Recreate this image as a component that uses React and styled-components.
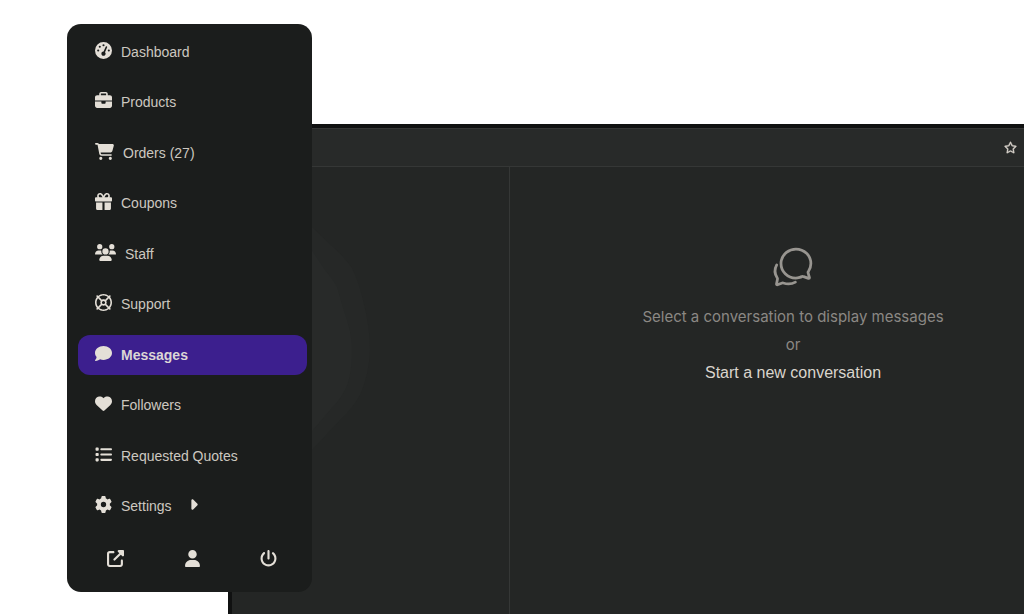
import React, { useState } from "react";
import styled, { createGlobalStyle } from "styled-components";
import {
  FaBriefcase,
  FaCaretRight,
  FaCartShopping,
  FaComment,
  FaGaugeHigh,
  FaGear,
  FaGift,
  FaHeart,
  FaList,
  FaPowerOff,
  FaRegLifeRing,
  FaRegStar,
  FaUpRightFromSquare,
  FaUser,
  FaUsers,
} from "react-icons/fa6";
import { IoChatbubblesOutline } from "react-icons/io5";

const links = [
  { name: "Dashboard", icon: FaGaugeHigh },
  { name: "Products", icon: FaBriefcase },
  { name: "Orders (27)", icon: FaCartShopping, iconWidth: 19 },
  { name: "Coupons", icon: FaGift },
  { name: "Staff", icon: FaUsers, iconWidth: 21 },
  { name: "Support", icon: FaRegLifeRing },
  { name: "Messages", icon: FaComment },
  { name: "Followers", icon: FaHeart },
  { name: "Requested Quotes", icon: FaList },
  { name: "Settings", icon: FaGear, more: true },
];

function App() {
  const [active, setActive] = useState("Messages");

  return (
    <Page>
      <GlobalStyle />
      <Chat>
        <ChatHeader>
          <StarButton aria-label="Starred">
            <FaRegStar />
          </StarButton>
        </ChatHeader>
        <ChatBody>
          <Conversations>
            <svg width="140" height="260" viewBox="0 0 140 260">
              <path
                d="M0 0H66L81 13L101 32Q114 44 120 53Q127 68 131 85Q138 112 138 135Q137 160 128 180Q121 193 108 205L80 235L52 256H0Z"
                fill="#262827"
              />
              <path
                d="M0 20H66L81 37L93 55Q102 66 105 72L111 93Q120 118 120 133Q120 162 113 175Q108 185 98 195L81 215L60 236H0Z"
                fill="#282a29"
              />
            </svg>
          </Conversations>
          <Empty>
            <IoChatbubblesOutline />
            <p>Select a conversation to display messages</p>
            <p>or</p>
            <a href="#new">Start a new conversation</a>
          </Empty>
        </ChatBody>
      </Chat>
      <Menu>
        <ul>
          {links.map(({ name, icon: Icon, iconWidth = 17, more }) => (
            <li key={name}>
              <MenuLink
                href="#menu"
                $active={active === name}
                $iconWidth={iconWidth}
                onClick={() => setActive(name)}
              >
                <Icon />
                <span>{name}</span>
                {more && <Caret />}
              </MenuLink>
            </li>
          ))}
        </ul>
        <MenuFooter>
          <a href="#store" aria-label="Visit store">
            <FaUpRightFromSquare />
          </a>
          <a href="#account" aria-label="Account">
            <FaUser />
          </a>
          <a href="#logout" aria-label="Log out">
            <FaPowerOff />
          </a>
        </MenuFooter>
      </Menu>
    </Page>
  );
}

const GlobalStyle = createGlobalStyle`
  * {
    box-sizing: border-box;
    margin: 0;
    padding: 0;
  }
  body {
    background: white;
    font-family: "Liberation Sans", Arial, sans-serif;
  }
  a {
    text-decoration: none;
  }
  ul {
    list-style: none;
  }
`;

/* the menu and the chat share the middle column, so the menu overlaps the chat */
const Page = styled.div`
  display: grid;
  grid-template-columns: 67px 161px 84px 1fr;
  min-height: 100vh;
`;

const Menu = styled.nav`
  grid-column: 2 / 4;
  grid-row: 1;
  display: flex;
  flex-direction: column;
  margin: 24px 0 22px;
  padding: 8px 5px 16px 11px;
  background: #1b1d1c;
  border-radius: 14px;
  z-index: 1;

  ul {
    flex: 1;
    display: flex;
    flex-direction: column;
    justify-content: space-between;
  }
`;

const MenuLink = styled.a`
  display: flex;
  align-items: center;
  gap: 9px;
  height: 40px;
  padding: 0 17px;
  border-radius: 12px;
  font-size: 14px;
  font-weight: ${(props) => (props.$active ? 700 : 400)};
  color: ${(props) => (props.$active ? "#dcd6d6" : "#cdc8c0")};
  background: ${(props) => (props.$active ? "#3c1f8e" : "transparent")};

  svg {
    width: ${(props) => props.$iconWidth}px;
    height: 17px;
    margin-bottom: 3px;
    color: #e4dfd7;
  }
`;

const Caret = styled(FaCaretRight)`
  margin-left: 4px;
`;

const MenuFooter = styled.div`
  display: flex;
  justify-content: space-between;
  margin-top: 16px;
  padding: 8px 30px 9px 29px;

  a {
    display: flex;
    color: #e4dfd7;
    font-size: 17px;
  }
`;

const Chat = styled.main`
  grid-column: 3 / -1;
  grid-row: 1;
  display: flex;
  flex-direction: column;
  margin-top: 124px;
  border: solid #101111;
  border-width: 4px 0 0 4px;
  background: #242625;
`;

const ChatHeader = styled.header`
  display: flex;
  align-items: center;
  justify-content: flex-end;
  height: 39px;
  padding-right: 7px;
  background: #282a29;
  border-top: 1px solid #353736;
  border-bottom: 1px solid #353736;
`;

const StarButton = styled.button`
  display: flex;
  border: none;
  background: none;
  color: #d5d0c9;
  font-size: 13px;
  cursor: pointer;

  svg {
    stroke: currentColor;
    stroke-width: 14;
  }
`;

const ChatBody = styled.div`
  flex: 1;
  display: grid;
  grid-template-columns: 278px 1fr;
`;

const Conversations = styled.section`
  padding-top: 48px;
  border-right: 1px solid #353736;
`;

const Empty = styled.section`
  display: flex;
  flex-direction: column;
  align-items: center;
  padding: 78px 0 0 52px;
  font-family: Inter, sans-serif;
  font-size: 15px;
  line-height: 28px;
  color: #8b8884;

  svg {
    width: 44px;
    height: 44px;
    margin-bottom: 14px;
    color: #989590;
  }
  a {
    color: #dad5cd;
    font-family: "Liberation Sans", Arial, sans-serif;
    font-size: 16px;
  }
`;

export default App;
